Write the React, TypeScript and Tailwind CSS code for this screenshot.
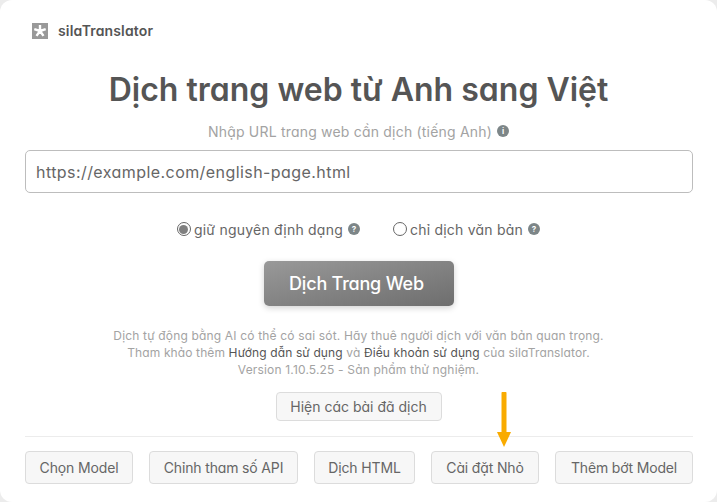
const actions = [
  { label: "Chọn Model", width: "w-[108px]" },
  { label: "Chỉnh tham số API", width: "w-[149px]" },
  { label: "Dịch HTML", width: "w-[101px]" },
  { label: "Cài đặt Nhỏ", width: "w-[108px]" },
  { label: "Thêm bớt Model", width: "w-[138px]" },
];

const font = "font-['Inter','Noto_Sans',sans-serif] [font-feature-settings:'cv11']";

function Hint({ mark }: { mark: string }) {
  return (
    <span className="ml-[5px] inline-flex h-[12px] w-[12px] items-center justify-center rounded-full bg-[#7d8688] text-[8px] font-bold leading-none tracking-normal text-white">
      {mark}
    </span>
  );
}

export default function App() {
  return (
    <div className="h-[502px] w-[717px] overflow-hidden bg-[#ececec]">
      <div className={`relative flex h-[502px] w-[717px] flex-col rounded-[12px] bg-white px-[25px] pt-[22px] ${font}`}>
        <div className="flex h-[17px] items-center pl-[7px]">
          <svg viewBox="0 0 16 16" className="h-[16px] w-[16px]">
            <rect width="16" height="16" fill="#999999" />
            <path d="M8 8V2M8 8L13.7 6.1M8 8L11.5 12.9M8 8L4.5 12.9M8 8L2.3 6.1" stroke="#fff" strokeWidth="2.4" />
          </svg>
          <span className="ml-[10px] text-[14px] font-semibold tracking-[0.15px] text-[#555555]">silaTranslator</span>
        </div>

        <h1 className="mt-[29px] text-center text-[32px] font-semibold leading-[44px] text-[#555555]">
          Dịch trang web từ Anh sang Việt
        </h1>

        <div className="mt-[9px] flex h-[20px] items-center justify-center text-[14px] tracking-[0.2px] text-[#a3a3a3]">
          Nhập URL trang web cần dịch (tiếng Anh)
          <Hint mark="i" />
        </div>

        <div className="mr-[-1px] mt-[9px] flex h-[43px] items-center rounded-[5px] border border-[#bdbdbd] pl-[10px] text-[16px] tracking-[0.43px] text-[#666666]">
          https://example.com/english-page.html
        </div>

        <div className="mt-[26px] flex h-[20px] items-center justify-center text-[14px] tracking-[0.22px] text-[#666666]">
          <span className="mr-[3px] flex h-[14px] w-[14px] items-center justify-center rounded-full border border-[#666666]">
            <span className="h-[9px] w-[9px] rounded-full bg-[#808080]" />
          </span>
          giữ nguyên định dạng
          <Hint mark="?" />
          <span className="ml-[33px] mr-[3px] h-[14px] w-[14px] rounded-full border border-[#666666]" />
          chỉ dịch văn bản
          <Hint mark="?" />
        </div>

        <button className="mx-auto mt-[22px] h-[45px] w-[190px] rounded-[5px] bg-gradient-to-br from-[#999999] to-[#6e6e6e] pr-[4px] text-[18px] font-medium tracking-[-0.2px] text-white shadow-[0_2px_6px_rgba(0,0,0,0.18)]">
          Dịch Trang Web
        </button>

        <div className="mt-[21px] text-center text-[12px] leading-[17px] tracking-[0.17px] text-[#a3a3a3]">
          <p>Dịch tự động bằng AI có thể có sai sót. Hãy thuê người dịch với văn bản quan trọng.</p>
          <p className="tracking-[0.12px]">
            Tham khảo thêm <span className="text-[#555555]">Hướng dẫn sử dụng</span> và{" "}
            <span className="text-[#555555]">Điều khoản sử dụng</span> của silaTranslator.
          </p>
          <p>Version 1.10.5.25 - Sản phẩm thử nghiệm.</p>
        </div>

        <button className="mx-auto mt-[14px] h-[29px] w-[166px] rounded-[4px] border border-[#dcdcdc] bg-[#f7f7f7] text-[14px] text-[#666666]">
          Hiện các bài đã dịch
        </button>

        <div className="mr-[-1px] mt-[15px] border-t border-[#ececec]" />

        <div className="mr-[-1px] mt-[14px] flex gap-[16px]">
          {actions.map((action) => (
            <button
              key={action.label}
              className={`h-[33px] whitespace-nowrap rounded-[4px] border border-[#dcdcdc] bg-[#f7f7f7] text-[14px] tracking-[-0.15px] text-[#666666] ${action.width}`}
            >
              {action.label}
            </button>
          ))}
        </div>

        <svg viewBox="0 0 16 56" className="absolute left-[495.5px] top-[392px] h-[56px] w-[16px]">
          <path d="M8 1.5V42" stroke="#f9ab00" strokeWidth="5" strokeLinecap="round" />
          <path d="M1 40H15L8 55Z" fill="#f9ab00" />
        </svg>
      </div>
    </div>
  );
}
